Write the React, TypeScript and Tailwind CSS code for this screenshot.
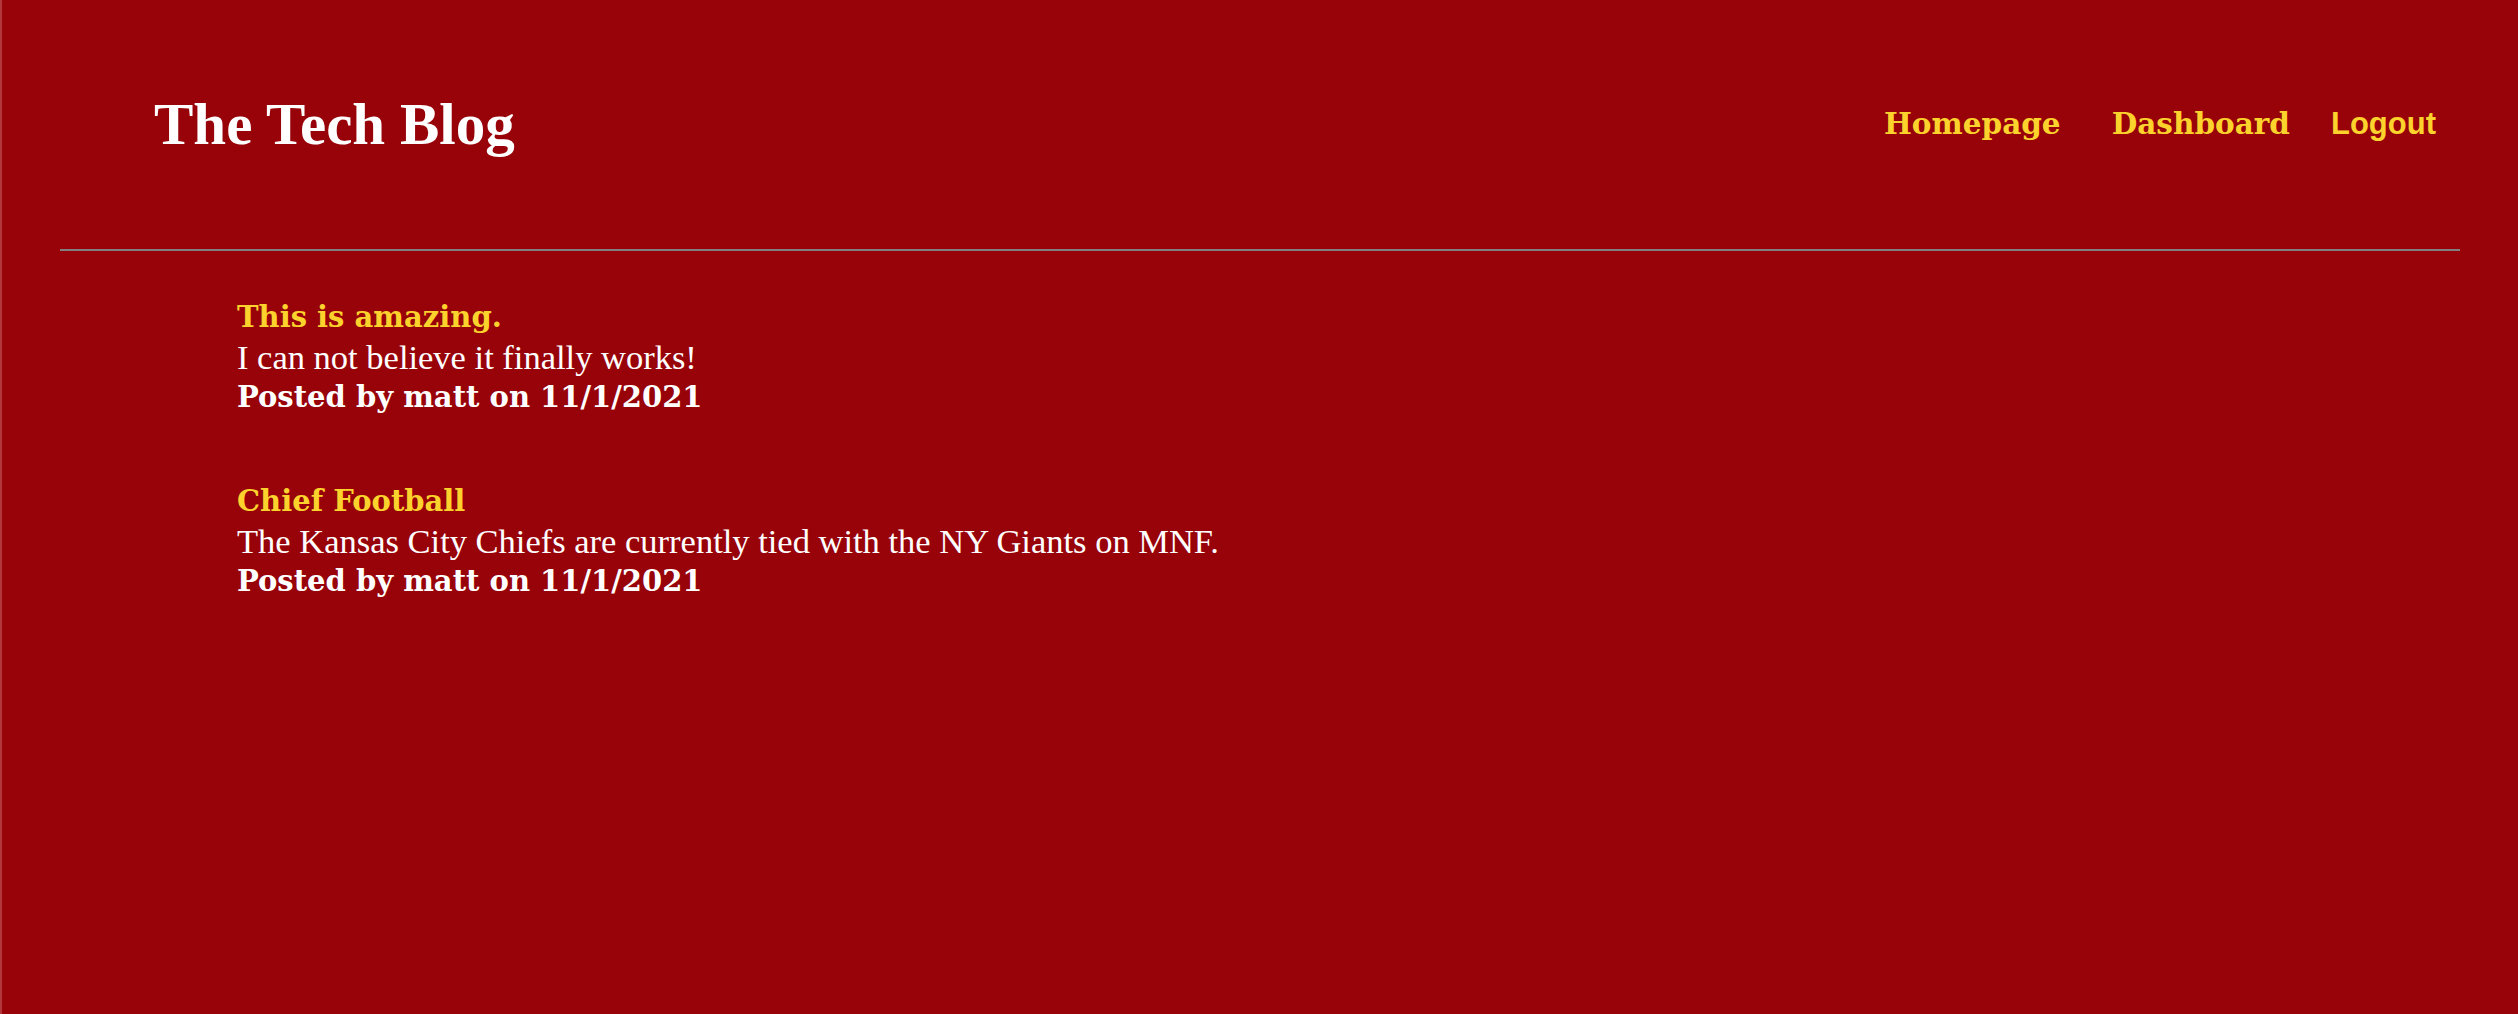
import React from "react";

type Post = { title: string; body: string; author: string; date: string };

const posts: Post[] = [
  {
    title: "This is amazing.",
    body: "I can not believe it finally works!",
    author: "matt",
    date: "11/1/2021",
  },
  {
    title: "Chief Football",
    body: "The Kansas City Chiefs are currently tied with the NY Giants on MNF.",
    author: "matt",
    date: "11/1/2021",
  },
];

const boldSerif = "font-['DejaVu_Serif',Georgia,serif] font-bold";
const bodySerif = "font-['Liberation_Serif',Georgia,serif]";

function Header() {
  return (
    <header className="flex items-center justify-between h-[249px] pl-[152px] pr-[82px]">
      <h1 className="font-['Liberation_Serif',Georgia,serif] text-[59px] font-bold text-white">
        The Tech Blog
      </h1>
      <nav className="flex items-center">
        <a className={`${boldSerif} text-[29.5px] text-[#fcd22c]`}>Homepage</a>
        <a className={`${boldSerif} text-[29.5px] text-[#fcd22c] ml-[51px]`}>Dashboard</a>
        <button className="font-['Liberation_Sans',Arial,sans-serif] text-[31px] font-bold text-[#fcd22c] ml-[41px]">
          Logout
        </button>
      </nav>
    </header>
  );
}

function PostItem({ post }: { post: Post }) {
  return (
    <article className="leading-[40px]">
      <h2 className={`${boldSerif} text-[29px] text-[#fcd22c]`}>{post.title}</h2>
      <p className={`${bodySerif} text-[34.5px] text-white`}>{post.body}</p>
      <p className={`${boldSerif} text-[29px] text-white`}>
        Posted by {post.author} on {post.date}
      </p>
    </article>
  );
}

export default function App() {
  return (
    <main className="min-h-screen w-full bg-[#98030a] border-l-2 border-[#b2373d]">
      <Header />
      <hr className="mx-[58px] border-0 border-t-2 border-[#808080]" />
      <section className="flex flex-col gap-[64px] pl-[235px] pt-[46px]">
        {posts.map((p) => (
          <PostItem key={p.title} post={p} />
        ))}
      </section>
    </main>
  );
}
